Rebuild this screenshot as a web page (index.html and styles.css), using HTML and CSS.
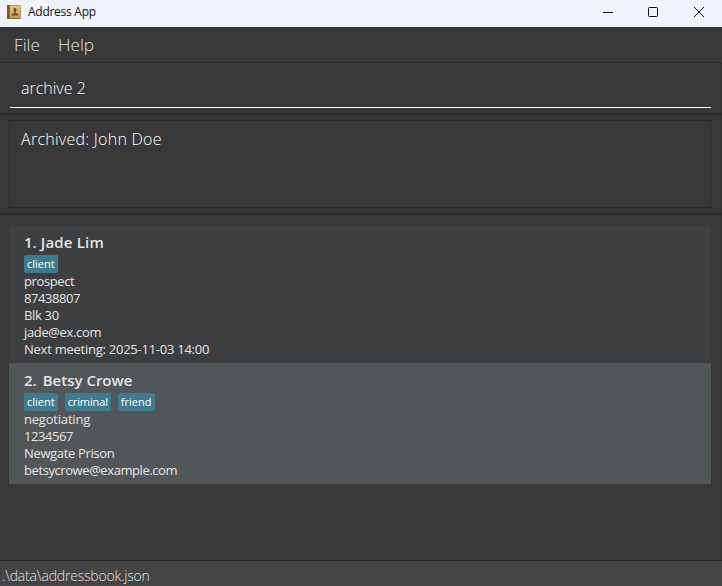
FILE: index.html
```html
<!DOCTYPE html>
<html lang="en">
<head>
<meta charset="utf-8">
<title>Address App</title>
<link rel="stylesheet" href="styles.css">
</head>
<body>
<div class="window">
  <header class="titlebar">
    <svg class="app-icon" width="15" height="15" viewBox="0 0 15 15">
      <defs><linearGradient id="cover" x1="0" y1="0" x2="0" y2="1"><stop offset="0" stop-color="#e6c487"/><stop offset="1" stop-color="#cf9a48"/></linearGradient></defs>
      <rect x="0" y="0" width="14" height="14" rx="1" fill="#8a6a40"/>
      <rect x="3" y="0.600" width="10.700" height="12.400" rx=".7" fill="url(#cover)"/>
      <rect x="0" y="0" width="2" height="14" rx=".7" fill="#6b5b49"/>
      <rect x="6.600" y="3" width="2.800" height="3.600" rx="1.200" fill="#6b5333"/>
      <path d="M7.200 6h1.600v2.200l2.400.5v1.800H4.800V8.700l2.400-.5z" fill="#6b5333"/>
    </svg>
    <span class="app-name">Address App</span>
    <svg class="controls" width="104" height="12" viewBox="0 0 104 12" fill="none" stroke="#111">
      <path d="M0 6.500h10"/>
      <rect x="45.500" y="1.500" width="9" height="9" rx=".8"/>
      <path d="M91 1l10 10M101 1L91 11"/>
    </svg>
  </header>
  <nav class="menubar"><span class="file">File</span><span class="help">Help</span></nav>
  <main class="content">
    <section class="command"><div class="field"><span>archive 2</span></div></section>
    <section class="result"><div class="display"><span>Archived: John Doe</span></div></section>
    <section class="people">
      <article class="card">
        <h2><span>1.</span><span class="jade">Jade Lim</span></h2>
        <div class="tags"><span class="tag client">client</span></div>
        <p><span class="prospect">prospect</span></p>
        <p><span class="number">87438807</span></p>
        <p><span class="block">Blk 30</span></p>
        <p><span class="jade-mail">jade@ex.com</span></p>
        <p><span class="meeting">Next meeting: 2025-11-03 14:00</span></p>
      </article>
      <article class="card even">
        <h2><span>2.</span><span class="betsy">Betsy Crowe</span></h2>
        <div class="tags"><span class="tag client">client</span><span class="tag criminal">criminal</span><span class="tag friend">friend</span></div>
        <p><span class="stage">negotiating</span></p>
        <p><span class="number">1234567</span></p>
        <p><span class="prison">Newgate Prison</span></p>
        <p><span class="betsy-mail">betsycrowe@example.com</span></p>
      </article>
    </section>
  </main>
  <footer class="status"><span>.\data\addressbook.json</span></footer>
</div>
</body>
</html>
```
FILE: styles.css
```css
* { box-sizing: border-box; }
body { margin: 0; background: #383838; font-family: "Open Sans", "Noto Sans", sans-serif; }
.window { width: 722px; height: 586px; display: flex; flex-direction: column; overflow: hidden; white-space: nowrap; }
.titlebar { height: 27px; flex: none; display: flex; align-items: center; padding: 0 15px 3px 7px; background: #eff3fb; color: #111; font-size: 12px; }
.app-icon { margin-right: 6px; }
.app-name { letter-spacing: -.27px; position: relative; top: -1px; }
.controls { margin-left: auto; }
.menubar { height: 35px; flex: none; display: flex; align-items: center; gap: 18px; padding-left: 14px; color: #e0e0e0; font-size: 17.300px; font-weight: 300; }
.content { height: 499px; flex: none; display: flex; flex-direction: column; border: solid #2b2b2b; border-width: 1px 1px 1px 0; }
.command { height: 52px; flex: none; padding: 5px 10px 0; border-bottom: 2px solid #2b2b2b; }
.field { height: 40px; border-bottom: 1px solid #fff; padding-left: 11px; line-height: 40px; font-size: 16px; font-weight: 300; color: #fff; }
.result { height: 100px; flex: none; padding: 5px 10px 5px 9px; border-bottom: 2px solid #2b2b2b; }
.display { height: 88px; border: 1px solid #2b2b2b; padding: 6px 11px; line-height: 24px; font-size: 16px; font-weight: 300; letter-spacing: .27px; color: #fff; }
.people { padding: 10px 10px 0 9px; }
.card { height: 138px; padding: 5px 15px 0; background: #3c3e3f; color: #e5e5e5; }
.even { height: 121px; background: #515658; }
h2 { margin: 0; height: 25px; line-height: 24px; font-size: 15px; font-weight: 600; display: flex; gap: 6px; }
.jade { margin-left: -2px; letter-spacing: .2px; }
.tags { display: flex; gap: 7px; height: 18px; }
.tag { height: 18px; padding: 0 3px; border-radius: 2px; background: #3e7b91; color: #fff; font-size: 11px; line-height: 18px; }
.criminal { letter-spacing: -.12px; }
.card p { margin: 0; height: 17px; line-height: 17px; font-size: 13px; }
.prospect { letter-spacing: -.4px; }
.number { letter-spacing: -.45px; }
.block { letter-spacing: -.33px; }
.jade-mail { letter-spacing: -.36px; }
.meeting { letter-spacing: -.25px; }
.stage { letter-spacing: -.2px; }
.prison { letter-spacing: -.35px; }
.betsy-mail { letter-spacing: -.42px; }
.status { height: 25px; flex: none; padding-left: 2px; background: #444; color: #e0e0e0; font-size: 14px; line-height: 29px; font-weight: 300; letter-spacing: -.19px; }
```
